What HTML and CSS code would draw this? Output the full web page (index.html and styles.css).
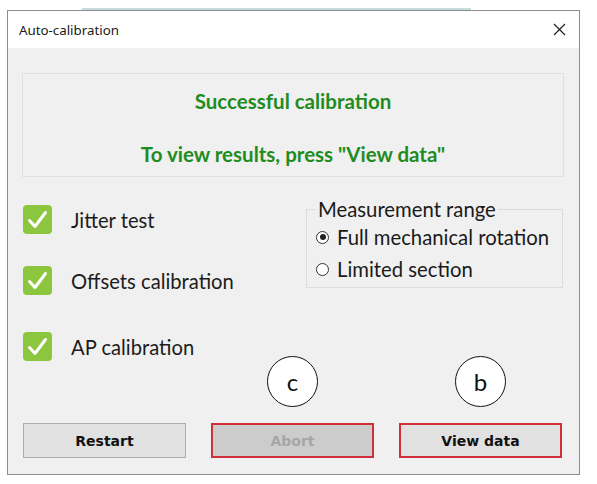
FILE: index.html
```html
<!DOCTYPE html>
<html>
<head>
<meta charset="utf-8">
<link rel="stylesheet" href="styles.css">
</head>
<body>
<div class="bgline"></div>
<div class="window">
  <div class="titlebar">
    <span class="title">Auto-calibration</span>
    <svg class="close" width="13" height="13" viewBox="0 0 13 13"><path d="M1 1 L12 12 M12 1 L1 12" stroke="#222" stroke-width="1.2" fill="none"/></svg>
  </div>
  <div class="content">
    <div class="msgbox">
      <div class="msg msg1">Successful calibration</div>
      <div class="msg msg2">To view results, press "View data"</div>
    </div>
    <div class="middle">
      <div class="checks">
        <div class="check"><span class="box"><svg width="29" height="29" viewBox="0 0 29 29"><path d="M6.5 15.5 L12 21.5 L22.5 7.5" stroke="#fff" stroke-width="3" fill="none" stroke-linecap="round" stroke-linejoin="round"/></svg></span><span class="label">Jitter test</span></div>
        <div class="check"><span class="box"><svg width="29" height="29" viewBox="0 0 29 29"><path d="M6.5 15.5 L12 21.5 L22.5 7.5" stroke="#fff" stroke-width="3" fill="none" stroke-linecap="round" stroke-linejoin="round"/></svg></span><span class="label">Offsets calibration</span></div>
        <div class="check third"><span class="box"><svg width="29" height="29" viewBox="0 0 29 29"><path d="M6.5 15.5 L12 21.5 L22.5 7.5" stroke="#fff" stroke-width="3" fill="none" stroke-linecap="round" stroke-linejoin="round"/></svg></span><span class="label">AP calibration</span></div>
      </div>
      <fieldset class="group">
        <legend>Measurement range</legend>
        <div class="radio"><span class="dot on"></span><span>Full mechanical rotation</span></div>
        <div class="radio"><span class="dot"></span><span>Limited section</span></div>
      </fieldset>
    </div>
    <div class="buttons">
      <div class="btn">Restart</div>
      <div class="btn disabled marked">Abort</div>
      <div class="btn marked">View data</div>
    </div>
    <div class="callout callout-c">c</div>
    <div class="callout callout-b">b</div>
  </div>
</div>
</body>
</html>
```
FILE: styles.css
```css
html, body {
  margin: 0;
  padding: 0;
  background: #ffffff;
}
body {
  width: 597px;
  height: 484px;
  overflow: hidden;
  font-family: "Lato", "Open Sans", sans-serif;
}
.bgline {
  margin: 8px 0 0 82px;
  width: 389px;
  height: 2px;
  background: #8fbcbc;
  opacity: 0.5;
}
.window {
  margin-left: 7px;
  width: 573px;
  height: 465px;
  box-sizing: border-box;
  border: 1px solid #8c8c8c;
  display: flex;
  flex-direction: column;
}
.titlebar {
  height: 37px;
  flex: none;
  background: #ffffff;
  display: flex;
  align-items: center;
  justify-content: space-between;
  padding: 0 13px 0 11px;
}
.title {
  font-family: "Noto Sans", "Open Sans", sans-serif;
  font-size: 13.3px;
  color: #1a1a1a;
}
.close {
  display: block;
}
.content {
  flex: 1;
  background: #f0f0f0;
  padding: 25px 15px 16px 14px;
  position: relative;
  display: flex;
  flex-direction: column;
}
.msgbox {
  height: 104px;
  box-sizing: border-box;
  border: 1px solid #e0e0e0;
  display: flex;
  flex-direction: column;
  align-items: center;
  padding-top: 14px;
}
.msg {
  color: #1f8c1f;
  font-weight: bold;
  font-size: 20.5px;
  line-height: 26px;
}
.msg2 {
  margin-top: 27px;
}
.middle {
  display: flex;
  justify-content: space-between;
  align-items: flex-start;
}
.checks {
  display: flex;
  flex-direction: column;
  margin-top: 28px;
  margin-left: 1px;
  gap: 32px;
}
.check {
  display: flex;
  align-items: center;
  gap: 19px;
}
.check.third {
  margin-top: 5px;
}
.box {
  width: 29px;
  height: 29px;
  border-radius: 4px;
  background: #8cc63f;
  display: block;
}
.box svg {
  display: block;
}
.label {
  font-size: 20.2px;
  color: #1c1c1c;
}
.group {
  margin: 20px 1px 0 0;
  width: 257px;
  height: 91px;
  box-sizing: border-box;
  border: 1px solid #dcdcdc;
  padding: 4px 0 0 9px;
  font-size: 20.3px;
  color: #1a1a1a;
}
.group legend {
  padding: 0 2px;
  margin-left: 0;
  line-height: 24px;
}
.radio {
  display: flex;
  align-items: center;
  gap: 8px;
  height: 32px;
  margin-top: -4px;
}
.radio + .radio {
  margin-top: 0;
}
.dot {
  width: 13px;
  height: 13px;
  border: 1px solid #333333;
  border-radius: 50%;
  background: #ffffff;
  box-sizing: border-box;
  position: relative;
  flex: none;
}
.dot.on::after {
  content: "";
  position: absolute;
  left: 2.5px;
  top: 2.5px;
  width: 6px;
  height: 6px;
  border-radius: 50%;
  background: #222222;
}
.buttons {
  margin-top: auto;
  display: flex;
  justify-content: space-between;
  padding: 0 2px 0 1px;
}
.btn {
  width: 163px;
  height: 35px;
  box-sizing: border-box;
  border: 1px solid #adadad;
  background: #e1e1e1;
  display: flex;
  align-items: center;
  justify-content: center;
  font-family: "DejaVu Sans", sans-serif;
  font-weight: bold;
  font-size: 14px;
  color: #111111;
}
.btn.marked {
  border: 2px solid #cf2e3a;
}
.btn.disabled {
  background: #cccccc;
  color: #a6a6a6;
}
.callout {
  position: absolute;
  top: 308px;
  width: 51px;
  height: 51px;
  box-sizing: border-box;
  border: 1.5px solid #111111;
  border-radius: 50%;
  background: #ffffff;
  display: flex;
  align-items: center;
  justify-content: center;
  font-family: "Lato", sans-serif;
  font-size: 24px;
  color: #111111;
}
.callout-c {
  left: 259px;
}
.callout-b {
  left: 447px;
}
```
